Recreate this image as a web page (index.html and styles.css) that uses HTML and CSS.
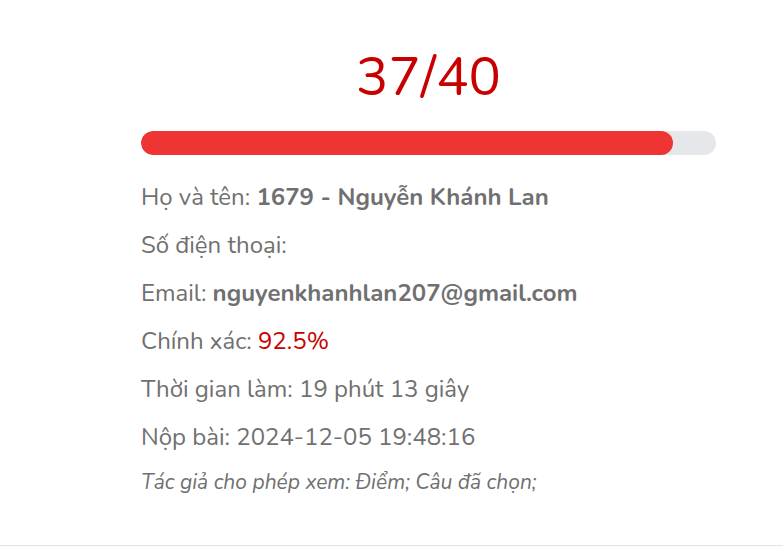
FILE: index.html
```html
<!DOCTYPE html>
<html lang="vi">
<head>
<meta charset="utf-8">
<link rel="stylesheet" href="styles.css">
</head>
<body>
<main class="page">
  <section class="result">
    <div class="score">37/40</div>
    <div class="bar"><div class="bar-fill" style="width:92.5%"></div></div>
    <ul class="info">
      <li>Họ và tên: <b>1679 - Nguyễn Khánh Lan</b></li>
      <li>Số điện thoại:</li>
      <li>Email: <b>nguyenkhanhlan207@gmail.com</b></li>
      <li>Chính xác: <span class="accent">92.5%</span></li>
      <li>Thời gian làm: 19 phút 13 giây</li>
      <li>Nộp bài: 2024-12-05 19:48:16</li>
      <li class="note">Tác giả cho phép xem: Điểm; Câu đã chọn;</li>
    </ul>
  </section>
</main>
</body>
</html>
```

FILE: styles.css
```css
* { box-sizing: border-box; }
html, body { margin: 0; padding: 0; background: #fff; }
body {
  font-family: "Nunito", "Lato", "Noto Sans", sans-serif;
  color: #707070;
}
.page {
  height: 546px;
  border-bottom: 1px solid #e3e3e3;
  padding-top: 44px;
}
.result {
  width: 575px;
  margin-left: 141px;
}
.score {
  text-align: center;
  font-size: 54px;
  line-height: 66px;
  color: #c80000;
  font-weight: 400;
}
.bar {
  margin-top: 21px;
  height: 24px;
  border-radius: 12px;
  background: #e5e7eb;
  overflow: hidden;
}
.bar-fill {
  height: 100%;
  background: #ef3434;
  border-radius: 12px;
}
.info {
  list-style: none;
  margin: 18px 0 0;
  padding: 0;
}
.info li {
  font-size: 24px;
  line-height: 48px;
}
.info b { font-weight: 700; }
.accent { color: #c80000; }
.info li.note {
  font-style: italic;
  font-size: 21px;
  line-height: 42px;
}
```
